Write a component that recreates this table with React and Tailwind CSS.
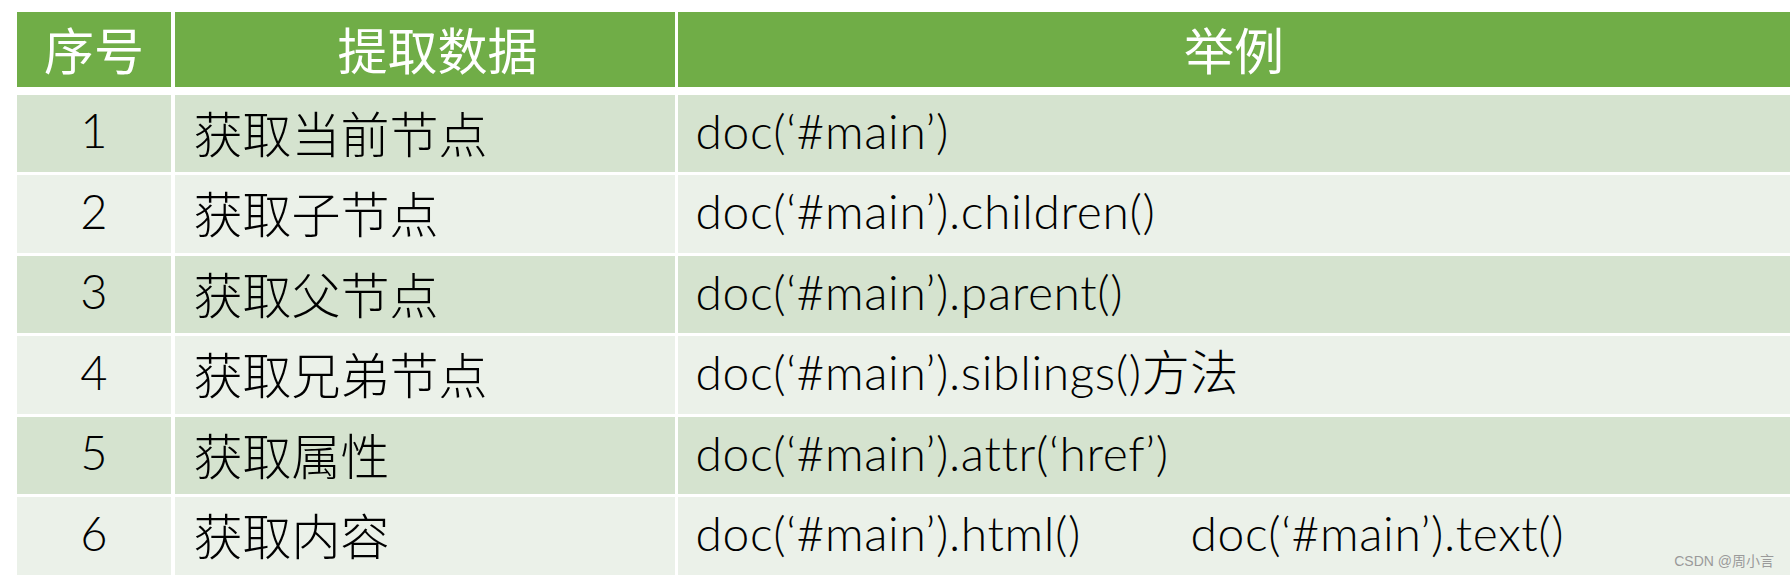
import React from "react";

const rows = [
  { n: "1", name: "获取当前节点", ex: ["doc(‘#main’)"] },
  { n: "2", name: "获取子节点", ex: ["doc(‘#main’).children()"] },
  { n: "3", name: "获取父节点", ex: ["doc(‘#main’).parent()"] },
  { n: "4", name: "获取兄弟节点", ex: ["doc(‘#main’).siblings()方法"] },
  { n: "5", name: "获取属性", ex: ["doc(‘#main’).attr(‘href’)"] },
  { n: "6", name: "获取内容", ex: ["doc(‘#main’).html()", "doc(‘#main’).text()"] },
];

const cjk = { fontFamily: '"Noto Sans CJK SC", sans-serif' };
const latin = { fontFamily: 'Lato, "Noto Sans CJK SC", sans-serif' };

export default function App() {
  return (
    <div className="relative w-[1790px] h-[578px] overflow-hidden bg-white pt-[11.7px] pl-[17px]">
      {/* header */}
      <div className="grid grid-cols-[154px_500px_1fr] gap-x-[3.5px] h-[75px] text-white text-[50px] leading-none" style={cjk}>
        <div className="bg-[#70ad47] flex items-center justify-center pb-[2px]">序号</div>
        <div className="bg-[#70ad47] flex items-center justify-center pl-[26px] pb-[2px]">提取数据</div>
        <div className="bg-[#70ad47] flex items-center justify-center pb-[2px]">举例</div>
      </div>

      {/* body */}
      <div className="mt-[8.3px] flex flex-col gap-[3px]">
        {rows.map((r, i) => {
          const bg = i % 2 === 0 ? "bg-[#d5e3cf]" : "bg-[#ebf1e9]";
          return (
            <div key={r.n} className="grid grid-cols-[154px_500px_1fr] gap-x-[3.5px] h-[77.5px] text-black leading-none">
              <div className={`${bg} flex items-center justify-center pb-[6px] text-[47px] font-light`} style={latin}>
                {r.n}
              </div>
              <div className={`${bg} flex items-center pl-[19px] pb-[5px] text-[49px] font-light`} style={cjk}>
                {r.name}
              </div>
              <div className={`${bg} flex items-center pl-[17.5px] pb-[6px] text-[48px] tracking-[0.6px] font-light`} style={latin}>
                {r.ex.map((t, k) => (
                  <span key={k} className={k === 0 && r.ex.length > 1 ? "w-[495px] shrink-0" : ""}>
                    {t}
                  </span>
                ))}
              </div>
            </div>
          );
        })}
      </div>

      <div
        className="absolute right-[16px] bottom-[10px] text-[14px] text-[#9a9a9a] leading-none"
        style={{ fontFamily: '"Liberation Sans", "Noto Sans CJK SC", sans-serif' }}
      >
        CSDN @周小言
      </div>
    </div>
  );
}
